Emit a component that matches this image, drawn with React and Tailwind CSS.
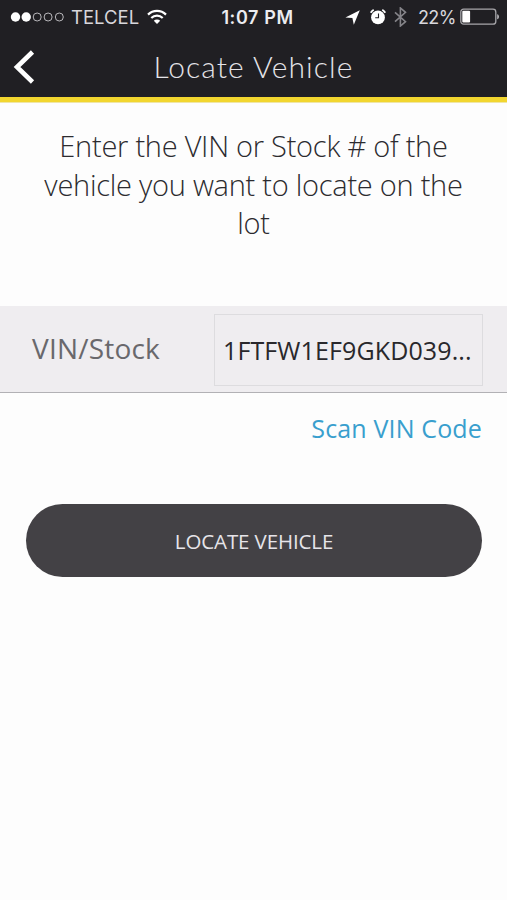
function SignalDots() {
  return (
    <svg className="shrink-0" width="56" height="12" viewBox="0 0 56 12">
      <circle cx="5.5" cy="6" r="4.7" fill="#fff" />
      <circle cx="16.2" cy="6" r="4.7" fill="#fff" />
      {[27.2, 38.1, 49.3].map((cx) => (
        <circle key={cx} cx={cx} cy="6" r="4" fill="none" stroke="#b9b8bc" strokeWidth="1" />
      ))}
    </svg>
  );
}

function Wifi() {
  return (
    <svg className="shrink-0" width="20" height="16" viewBox="0 0 20 16" fill="none" stroke="#fff" strokeWidth="2.2">
      <path d="M1 5.6a12.8 12.8 0 0 1 18 0" />
      <path d="M4.3 9a8.1 8.1 0 0 1 11.4 0" />
      <path d="M10 15 6.8 11.8a4.5 4.5 0 0 1 6.4 0Z" fill="#fff" stroke="none" />
    </svg>
  );
}

function LocationArrow() {
  return (
    <svg className="shrink-0" width="15" height="15" viewBox="0 0 15 15">
      <path d="M14.8.2 8.8 14.8 7.4 8 .4 7.6Z" fill="#fff" />
    </svg>
  );
}

function Alarm() {
  return (
    <svg className="shrink-0" width="18" height="18" viewBox="0 0 18 18">
      <circle cx="9" cy="9.4" r="6.9" fill="#fff" />
      <path d="M1.7 4.8A9 9 0 0 1 4.7 1.8M16.3 4.8A9 9 0 0 0 13.3 1.8" fill="none" stroke="#fff" strokeWidth="1.8" />
      <path d="M9.5 5.4v4.4H6.2" fill="none" stroke="#201f23" strokeWidth="1.1" />
    </svg>
  );
}

function Bluetooth() {
  return (
    <svg className="shrink-0" width="13" height="20" viewBox="0 0 13 20">
      <path d="M1 5.3 11.5 14.7 6.4 19V1l5.1 4.3L1 14.7" fill="none" stroke="#858489" strokeWidth="1.6" />
    </svg>
  );
}

function Battery() {
  return (
    <svg className="shrink-0" width="40" height="18" viewBox="0 0 40 18">
      <rect x=".8" y="1.2" width="35" height="15" rx="2.8" fill="none" stroke="#a7a6aa" strokeWidth="1.3" />
      <rect x="2.3" y="2.8" width="7.8" height="11.8" rx="1" fill="#fff" />
      <path d="M37.2 6.2c2.4.4 2.4 4.6 0 5Z" fill="#b5b4b8" />
    </svg>
  );
}

function StatusBar() {
  return (
    <div className="flex h-[34px] items-center justify-between pl-[10px] pr-[7px] font-['Inter',sans-serif] text-[18px] leading-none text-[#d8d7dc]">
      <div className="flex w-[190px] items-center">
        <SignalDots />
        <span className="ml-[5px] w-[68px] whitespace-nowrap text-[18.5px]">TELCEL</span>
        <span className="ml-[8px] flex"><Wifi /></span>
      </div>
      <span className="whitespace-nowrap pl-[5px] pt-px text-[18px] font-semibold tracking-[0.6px] text-[#ececf0]">1:07 PM</span>
      <div className="flex w-[190px] items-center justify-end">
        <LocationArrow />
        <span className="ml-[9px] flex"><Alarm /></span>
        <span className="ml-[7px] flex"><Bluetooth /></span>
        <span className="ml-[11px] w-[38px] whitespace-nowrap pt-px text-[18px] tracking-[-0.6px]">22%</span>
        <span className="ml-[4px] flex"><Battery /></span>
      </div>
    </div>
  );
}

export default function App() {
  return (
    <div className="flex h-[900px] w-[507px] flex-col overflow-hidden bg-[#fdfdfd] font-['Open_Sans',sans-serif]">
      <header className="h-[102px] shrink-0 border-b-[5px] border-[#f2d62f] bg-[#201f23]">
        <StatusBar />
        <div className="grid h-[63px] grid-cols-[50px_1fr_50px] items-center">
          <button className="pl-[13px] pt-[3px]" aria-label="Back">
            <svg width="22" height="34" viewBox="0 0 22 34">
              <path d="M19.5 2 4 17l15.5 15" fill="none" stroke="#fff" strokeWidth="4.6" />
            </svg>
          </button>
          <h1 className="whitespace-nowrap pt-px text-center font-['Lato',sans-serif] text-[30px] font-light leading-none tracking-[1.1px] text-[#e4e3e8]">
            Locate Vehicle
          </h1>
        </div>
      </header>

      <main className="flex flex-col border-t border-[#efe6a6]">
        <p className="h-[203px] pt-[24px] text-center text-[29px] font-light leading-[38.7px] tracking-[-0.26px] text-[#2c2b2f]">
          Enter the VIN or Stock # of the
          <br />
          vehicle you want to locate on the
          <br />
          lot
        </p>

        <div className="flex h-[87px] items-center border-b border-[#b2b1b5] bg-[#efedf0] pl-[32px] pr-[24px] pt-px">
          <span className="w-[182px] pb-[3px] text-[28px] leading-none tracking-[0.2px] text-[#69686c]">VIN/Stock</span>
          <div className="flex h-[72px] flex-1 items-center border border-[#dddcdf] pl-[8px]">
            <span className="whitespace-nowrap pt-px text-[25px] leading-none tracking-[0.12px] text-[#29282c]">1FTFW1EF9GKD039...</span>
          </div>
        </div>

        <a className="mr-[25px] mt-[17px] self-end whitespace-nowrap text-[25px] leading-[36px] tracking-[0.15px] text-[#399fce]">Scan VIN Code</a>

        <button className="ml-[26px] mr-[25px] mt-[58px] h-[73px] rounded-full bg-[#434145] pt-px text-[20.5px] leading-none tracking-[-0.12px] text-[#e6e4e9]">
          LOCATE VEHICLE
        </button>
      </main>
    </div>
  );
}
